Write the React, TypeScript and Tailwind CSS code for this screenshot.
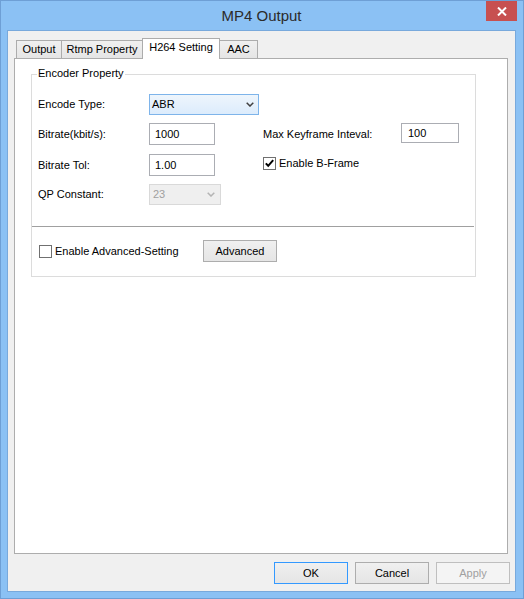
import React from "react";

function Chevron({ color }: { color: string }) {
  return (
    <svg width="8" height="5" viewBox="0 0 8 5" className="shrink-0">
      <polyline points="0.7,0.7 4,4 7.3,0.7" fill="none" stroke={color} strokeWidth="1.5" />
    </svg>
  );
}

function CheckBox({ checked }: { checked?: boolean }) {
  return (
    <div className="w-[13px] h-[13px] border border-[#707070] bg-white flex items-center justify-center shrink-0">
      {checked && (
        <svg width="11" height="11" viewBox="0 0 11 11">
          <path d="M1.8 5.4 L4.2 7.8 L9.2 2.2" fill="none" stroke="#000" strokeWidth="2" />
        </svg>
      )}
    </div>
  );
}

export default function App() {
  return (
    <div className="relative w-[524px] h-[599px] flex flex-col border border-[#6e9fd5] bg-[#8bc1f4] pl-[6px] pr-[7px] pb-[6px] [font-family:'Liberation_Sans',Arial,sans-serif] text-[11px] text-black">
      {/* Title bar */}
      <div className="h-[29px] flex items-center justify-center text-[15px] text-[#2b2b2b] pt-[1px]">
        MP4 Output
      </div>
      <div className="absolute top-0 right-[6px] w-[31px] h-[20px] bg-[#c75050] flex items-center justify-center">
        <svg width="10" height="9" viewBox="0 0 10 9">
          <path d="M1 0.5 L9 8.5 M9 0.5 L1 8.5" stroke="#fff" strokeWidth="2" />
        </svg>
      </div>

      {/* Client area */}
      <div className="w-[509px] h-[562px] border border-[#78a9dc] bg-[#f0f0f0] flex flex-col pt-[7px] pl-[6px]">
        {/* Tabs */}
        <div className="flex items-end h-[20px] pl-[2px]">
          <div className="w-[46px] h-[18px] border border-b-0 border-[#acacac] bg-gradient-to-b from-[#f0f0f0] to-[#e5e5e5] flex items-center justify-center">
            Output
          </div>
          <div className="w-[82px] h-[18px] -ml-px border border-b-0 border-[#acacac] bg-gradient-to-b from-[#f0f0f0] to-[#e5e5e5] flex items-center justify-center">
            Rtmp Property
          </div>
          <div className="relative z-10 w-[78px] h-[21px] -ml-px -mb-px border border-b-0 border-[#acacac] bg-white flex justify-center pt-[2px] leading-[13px]">
            H264 Setting
          </div>
          <div className="w-[39px] h-[18px] -ml-px border border-b-0 border-[#acacac] bg-gradient-to-b from-[#f0f0f0] to-[#e5e5e5] flex items-center justify-center">
            AAC
          </div>
        </div>

        {/* Panel */}
        <div className="w-[494px] h-[496px] border border-[#adadad] bg-white flex flex-col">
          {/* Group box */}
          <div className="relative ml-[16px] mt-[15px] w-[445px] h-[203px] border border-[#dcdcdc] flex flex-col pt-[19px]">
            <span className="absolute left-[5px] top-[-9px] px-[1px] bg-white leading-[14px]">Encoder Property</span>

            <div className="flex flex-col pl-[6px]">
              {/* Row 1 */}
              <div className="flex items-center h-[21px]">
                <div className="w-[111px]">Encode Type:</div>
                <div className="w-[110px] h-[21px] border border-[#7eb4ea] bg-gradient-to-b from-[#eef5fc] to-[#dcecfc] flex items-center justify-between pl-[2px] pr-[4px]">
                  <span>ABR</span>
                  <Chevron color="#404040" />
                </div>
              </div>

              {/* Row 2 */}
              <div className="flex items-center h-[22px] mt-[8px]">
                <div className="w-[111px]">Bitrate(kbit/s):</div>
                <div className="w-[66px] h-[22px] border border-[#abadb3] bg-white flex items-center pl-[5px]">1000</div>
                <div className="w-[138px] ml-[48px]">Max Keyframe Inteval:</div>
                <div className="self-start w-[58px] h-[20px] border border-[#abadb3] bg-white flex items-center pl-[6px]">100</div>
              </div>

              {/* Row 3 */}
              <div className="flex items-center h-[22px] mt-[9px]">
                <div className="w-[111px]">Bitrate Tol:</div>
                <div className="w-[66px] h-[22px] border border-[#abadb3] bg-white flex items-center pl-[5px]">1.00</div>
                <div className="self-start mt-[1px] ml-[48px] flex items-center">
                  <CheckBox checked />
                  <span className="ml-[3px]">Enable B-Frame</span>
                </div>
              </div>

              {/* Row 4 */}
              <div className="flex items-center h-[21px] mt-[8px]">
                <div className="w-[111px]">QP Constant:</div>
                <div className="w-[72px] h-[21px] border border-[#d9d9d9] bg-[#efefef] text-[#a0a0a0] flex items-center justify-between pl-[3px] pr-[5px]">
                  <span>23</span>
                  <Chevron color="#b4b4b4" />
                </div>
              </div>
            </div>

            {/* Separator */}
            <div className="w-[442px] h-px bg-[#a0a0a0] mt-[21px]" />

            {/* Bottom row */}
            <div className="flex items-center h-[22px] mt-[13px] pl-[7px]">
              <div className="w-[164px] flex items-center">
                <CheckBox />
                <span className="ml-[3px]">Enable Advanced-Setting</span>
              </div>
              <div className="w-[74px] h-[22px] border border-[#adadad] bg-gradient-to-b from-[#f0f0f0] to-[#e5e5e5] flex items-center justify-center">
                Advanced
              </div>
            </div>
          </div>
        </div>

        {/* Dialog buttons */}
        <div className="flex justify-end gap-[7px] mt-[8px] mr-[5px]">
          <div className="w-[74px] h-[22px] border border-[#3399ff] bg-gradient-to-b from-[#f0f0f0] to-[#e5e5e5] flex items-center justify-center">
            OK
          </div>
          <div className="w-[74px] h-[22px] border border-[#adadad] bg-gradient-to-b from-[#f0f0f0] to-[#e5e5e5] flex items-center justify-center">
            Cancel
          </div>
          <div className="w-[74px] h-[22px] border border-[#bfbfbf] bg-[#f4f4f4] text-[#a0a0a0] flex items-center justify-center">
            Apply
          </div>
        </div>
      </div>
    </div>
  );
}
